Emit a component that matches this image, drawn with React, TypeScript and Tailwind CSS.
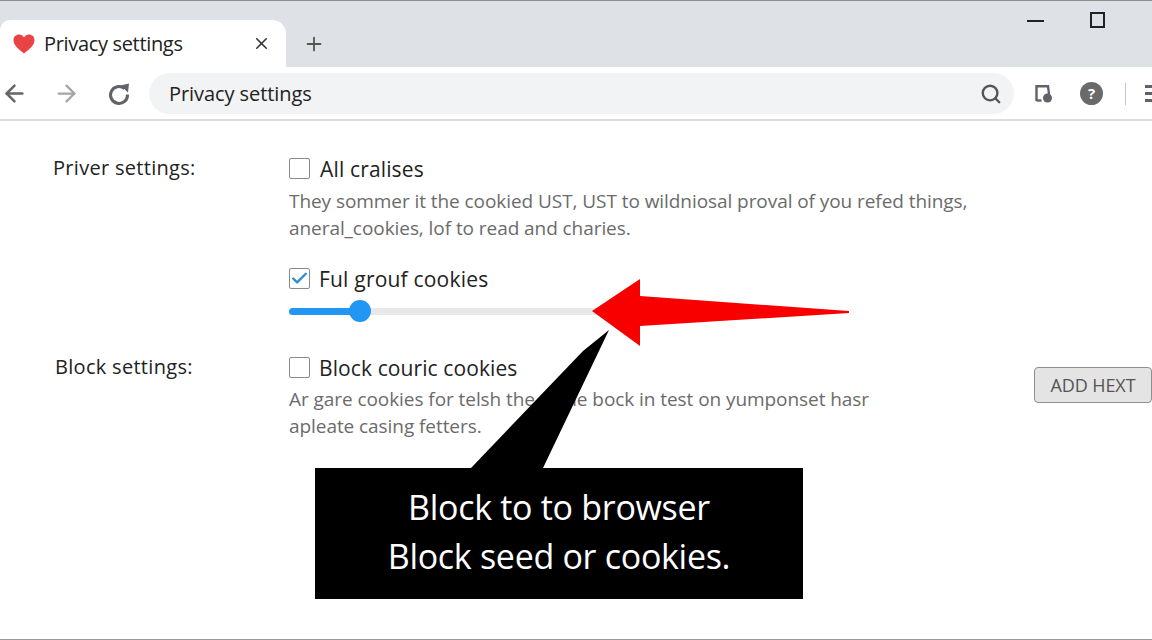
import { ArrowLeft, ArrowRight, Search, Plus, X, Check } from "lucide-react";

const font = "font-['Open_Sans','Noto_Sans',sans-serif]";

function Box({ checked }: { checked?: boolean }) {
  return (
    <span className="flex h-[21px] w-[21px] shrink-0 items-center justify-center rounded-[2px] border border-[#8a8a8a] bg-white">
      {checked ? <Check size={19} strokeWidth={3} className="text-[#2b8fd6]" /> : null}
    </span>
  );
}

export default function App() {
  return (
    <div className={`relative h-[640px] w-[1152px] overflow-hidden bg-white ${font} text-[#222]`}>
      {/* tab strip */}
      <div className="flex h-[67px] items-end border-t border-[#8f8f8f] bg-[#dee1e6]">
        <div className="flex h-[47px] w-[286px] shrink-0 items-center rounded-tl-[10px] rounded-tr-[14px] bg-white pl-[13px] pr-[15px]">
          <svg width="22" height="20" viewBox="0 0 22 20" className="shrink-0">
            <path d="M11 19.5 C4 14 0.5 10.5 0.5 6 C0.5 2.8 3 0.5 6 0.5 C8 0.5 10 1.5 11 3.4 C12 1.5 14 0.5 16 0.5 C19 0.5 21.5 2.8 21.5 6 C21.5 10.5 18 14 11 19.5 Z" fill="#ea4345" />
          </svg>
          <span className="ml-[9px] flex-1 text-[20px] leading-none tracking-[-0.33px]">Privacy settings</span>
          <X size={19} strokeWidth={2} className="text-[#333]" />
        </div>
        <div className="flex h-[47px] w-[56px] shrink-0 items-center justify-center">
          <Plus size={22} strokeWidth={2} className="text-[#555]" />
        </div>
        <div className="flex h-[66px] flex-1 items-start justify-end">
          <span className="mr-[46px] mt-[19px] h-[2px] w-[17px] shrink-0 bg-[#222]" />
          <span className="mr-[44px] mt-[11px] h-[16px] w-[15px] shrink-0 border-2 border-[#222]" />
          <X size={18} strokeWidth={2} className="mr-[-15px] mt-[10px] shrink-0 text-[#333]" />
        </div>
      </div>

      {/* toolbar */}
      <div className="flex h-[54px] items-center border-b-2 border-[#dcdcdc] bg-white pt-[1px]">
        <ArrowLeft size={27} strokeWidth={2.2} className="ml-[1px] shrink-0 text-[#666]" />
        <ArrowRight size={27} strokeWidth={2} className="ml-[25px] shrink-0 text-[#a5a5a5]" />
        <svg width="24" height="24" viewBox="0 0 24 24" fill="none" className="ml-[27px] shrink-0">
          <path d="M17.5 6.5 A8.5 8.5 0 1 0 20.5 12.5" stroke="#5f6368" strokeWidth="3" />
          <polygon points="13.5,3.5 22,1.5 21,10.5" fill="#5f6368" />
        </svg>
        <div className="ml-[18px] flex h-[41px] w-[865px] shrink-0 items-center justify-between rounded-full bg-[#f1f3f4] pl-[20px] pr-[12px]">
          <span className="text-[20px] tracking-[-0.07px]">Privacy settings</span>
          <Search size={22} strokeWidth={2.6} className="text-[#555]" />
        </div>
        <svg width="20" height="20" viewBox="0 0 20 20" className="ml-[20px] shrink-0" fill="none">
          <path d="M2.5 17V2.2h11.5l1 8" stroke="#5f6368" strokeWidth="2.4" />
          <path d="M2.5 16.5h5" stroke="#5f6368" strokeWidth="2.4" />
          <circle cx="13.5" cy="14" r="4.5" fill="#5f6368" />
        </svg>
        <span className="ml-[26px] flex h-[23px] w-[23px] shrink-0 items-center justify-center rounded-full bg-[#6a6a6a] text-[15px] font-bold text-white">?</span>
        <span className="ml-[22px] h-[22px] w-[1px] shrink-0 bg-[#c4c4c4]" />
        <span className="ml-[19px] flex w-[10px] shrink-0 flex-col gap-[4px]">
          <span className="h-[3px] bg-[#5f6368]" />
          <span className="h-[3px] bg-[#5f6368]" />
          <span className="h-[3px] bg-[#5f6368]" />
        </span>
      </div>

      {/* content */}
      <div className="flex pl-[53px] pt-[34px]">
        <div className="w-[236px] text-[20px] leading-[26px] tracking-[0.3px]">Priver settings:</div>
        <div className="flex-1">
          <div className="flex h-[26px] items-center gap-[10px]">
            <Box />
            <span className="pt-[1px] text-[21px] leading-[26px] tracking-[0.15px]">All cralises</span>
          </div>
          <p className="mt-[7px] w-[720px] text-[19px] leading-[27px] tracking-[-0.065px] text-[#6b6b6b]">
            They sommer it the cookied UST, UST to wildniosal proval of you refed things,<br />
            aneral_cookies, lof to read and charies.
          </p>
          <div className="mt-[23px] flex h-[26px] items-center gap-[9px]">
            <Box checked />
            <span className="pt-[1px] text-[21px] leading-[26px] tracking-[0.2px]">Ful grouf cookies</span>
          </div>
          <div className="mt-[9px] flex h-[22px] w-[320px] items-center">
            <span className="h-[7px] w-[62px] rounded-l-full bg-[#2196f3]" />
            <span className="z-10 ml-[-2px] h-[22px] w-[22px] rounded-full bg-[#2196f3]" />
            <span className="ml-[-2px] h-[7px] flex-1 bg-[#e8e8e8]" />
          </div>
        </div>
      </div>

      <div className="mt-[32px] flex pl-[55px]">
        <div className="w-[234px] text-[20px] leading-[26px] tracking-[0.3px]">Block settings:</div>
        <div className="flex-1">
          <div className="flex h-[26px] items-center gap-[9px]">
            <Box />
            <span className="pt-[1px] text-[21px] leading-[26px] tracking-[0.1px]">Block couric cookies</span>
          </div>
          <div className="flex items-start justify-between">
            <p className="mt-[6px] w-[640px] text-[19px] leading-[27px] tracking-[-0.065px] text-[#6b6b6b]">
              Ar gare cookies for telsh the same bock in test on yumponset hasr<br />
              apleate casing fetters.
            </p>
            <button className="mt-[-13px] flex h-[36px] w-[118px] shrink-0 items-center justify-center rounded-[4px] border border-[#8f8f8f] bg-[#e4e4e4] text-[18px] tracking-[-0.1px] text-[#555]">
              ADD HEXT
            </button>
          </div>
        </div>
      </div>

      {/* annotation: red arrow and callout wedge */}
      <svg className="absolute left-0 top-0" width="1152" height="640" viewBox="0 0 1152 640">
        <polygon points="592,311 640,279 640,296 849,311 849,313 640,326 640,346" fill="#f80000" />
        <polygon points="609,330 543,468 471,468 583,351" fill="#000" />
      </svg>

      {/* annotation: callout */}
      <div className="absolute left-[315px] top-[468px] flex h-[131px] w-[488px] flex-col items-center justify-center bg-black pb-[3px] text-[34px] leading-[49px] tracking-[-0.3px] text-white">
        <span>Block to to browser</span>
        <span>Block seed or cookies.</span>
      </div>

      <div className="absolute bottom-0 left-0 h-[1px] w-full bg-[#9a9a9a]" />
    </div>
  );
}
